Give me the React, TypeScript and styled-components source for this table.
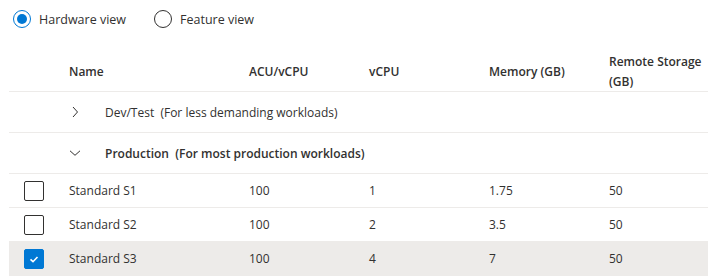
import styled, { createGlobalStyle } from "styled-components";

const GlobalStyle = createGlobalStyle`
  body {
    margin: 0;
    background: #fff;
    font-family: "Open Sans", "Noto Sans", sans-serif;
    font-size: 12px;
    color: #323130;
  }
`;

interface Sku {
  name: string;
  acu: number;
  vcpu: number;
  memory: string;
  storage: number;
  selected: boolean;
}

const skus: Sku[] = [
  { name: "Standard S1", acu: 100, vcpu: 1, memory: "1.75", storage: 50, selected: false },
  { name: "Standard S2", acu: 100, vcpu: 2, memory: "3.5", storage: 50, selected: false },
  { name: "Standard S3", acu: 100, vcpu: 4, memory: "7", storage: 50, selected: true },
];

function Chevron({ open }: { open: boolean }) {
  return (
    <svg width="12" height="12" viewBox="0 0 12 12" fill="none">
      {open ? (
        <path d="M1 3.8 L6 8.3 L11 3.8" stroke="#323130" strokeWidth="1" />
      ) : (
        <path d="M4 1 L8.5 6 L4 11" stroke="#323130" strokeWidth="1" />
      )}
    </svg>
  );
}

export default function App() {
  return (
    <>
      <GlobalStyle />
      <Page>
        <RadioGroup>
          <RadioOption>
            <RadioCircle checked />
            Hardware view
          </RadioOption>
          <RadioOption>
            <RadioCircle checked={false} />
            Feature view
          </RadioOption>
        </RadioGroup>

        <Table>
          <HeaderRow>
            <Cell />
            <HeadCell>Name</HeadCell>
            <HeadCell>ACU/vCPU</HeadCell>
            <HeadCell>vCPU</HeadCell>
            <HeadCell>Memory (GB)</HeadCell>
            <HeadCell>
              Remote Storage
              <br />
              (GB)
            </HeadCell>
          </HeaderRow>

          <GroupRow>
            <Cell />
            <GroupCell>
              <Chevron open={false} />
              <GroupTitle bold={false}>Dev/Test&nbsp; (For less demanding workloads)</GroupTitle>
            </GroupCell>
          </GroupRow>

          <GroupRow>
            <Cell />
            <GroupCell>
              <Chevron open />
              <GroupTitle bold>Production&nbsp; (For most production workloads)</GroupTitle>
            </GroupCell>
          </GroupRow>

          {skus.map((s) => (
            <DataRow key={s.name} selected={s.selected}>
              <CheckCell>
                <Checkbox checked={s.selected}>
                  {s.selected && (
                    <svg width="12" height="12" viewBox="0 0 12 12">
                      <path d="M2.5 6.4 L5 8.7 L9.5 4" stroke="#fff" strokeWidth="1.6" fill="none" />
                    </svg>
                  )}
                </Checkbox>
              </CheckCell>
              <Cell>{s.name}</Cell>
              <Cell>{s.acu}</Cell>
              <Cell>{s.vcpu}</Cell>
              <Cell>{s.memory}</Cell>
              <Cell>{s.storage}</Cell>
            </DataRow>
          ))}
        </Table>
      </Page>
    </>
  );
}

const Page = styled.div`
  width: 717px;
`;

const RadioGroup = styled.div`
  display: flex;
  gap: 28px;
  padding: 9px 0 0 13px;
  height: 36px;
  box-sizing: border-box;
`;

const RadioOption = styled.label`
  display: flex;
  align-items: center;
  gap: 8px;
  height: 20px;
  font-size: 12.5px;
`;

const RadioCircle = styled.span<{ checked: boolean }>`
  width: 18px;
  height: 18px;
  border-radius: 50%;
  box-sizing: border-box;
  border: 1px solid ${(p) => (p.checked ? "#0078d4" : "#323130")};
  display: flex;
  align-items: center;
  justify-content: center;
  &::after {
    content: "";
    width: 10px;
    height: 10px;
    border-radius: 50%;
    background: ${(p) => (p.checked ? "#0078d4" : "transparent")};
  }
`;

const Table = styled.div`
  margin: 9px 9px 0;
`;

const columns = "51px 180px 120px 120px 120px 1fr";

const Row = styled.div`
  display: grid;
  grid-template-columns: ${columns};
  align-items: center;
  border-bottom: 1px solid #edebe9;
  box-sizing: border-box;
`;

const HeaderRow = styled(Row)`
  height: 47px;
  padding-top: 7px;
`;

const GroupRow = styled(Row)`
  height: 41px;
`;

const DataRow = styled(Row)<{ selected: boolean }>`
  height: 34px;
  background: ${(p) => (p.selected ? "#edebe9" : "transparent")};
  &:last-child {
    border-bottom: none;
  }
`;

const Cell = styled.div`
  padding-left: 9px;
  line-height: 18px;
`;

const HeadCell = styled(Cell)`
  font-weight: 600;
  line-height: 20px;
`;

const GroupCell = styled.div`
  grid-column: 2 / -1;
  display: flex;
  align-items: center;
  gap: 24px;
  padding-left: 9px;
`;

const GroupTitle = styled.span<{ bold: boolean }>`
  font-weight: ${(p) => (p.bold ? 600 : 400)};
  white-space: pre;
`;

const CheckCell = styled.div`
  padding-left: 15px;
  display: flex;
  align-items: center;
`;

const Checkbox = styled.span<{ checked: boolean }>`
  width: 20px;
  height: 20px;
  box-sizing: border-box;
  border-radius: 2px;
  border: 1px solid ${(p) => (p.checked ? "#0078d4" : "#323130")};
  background: ${(p) => (p.checked ? "#0078d4" : "#fff")};
  display: flex;
  align-items: center;
  justify-content: center;
`;
